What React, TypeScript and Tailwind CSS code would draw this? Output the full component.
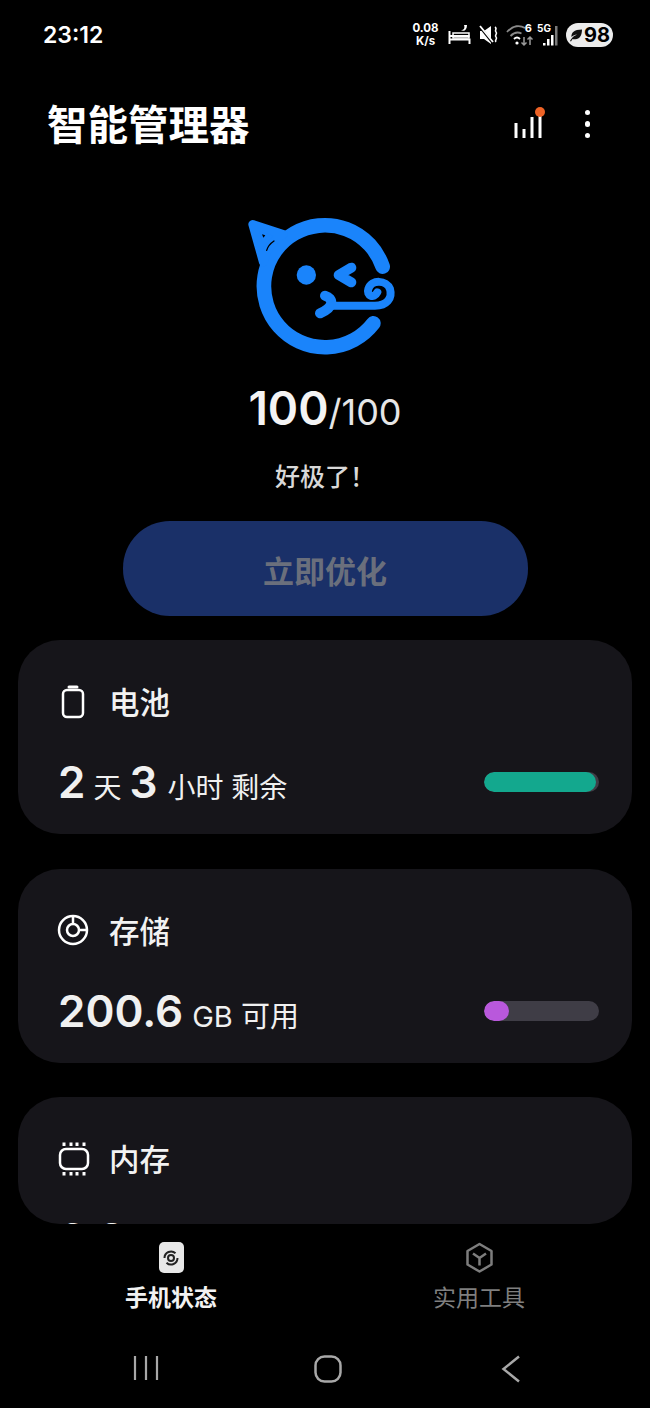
import React from "react";

const fontStack = { fontFamily: 'Inter, "Noto Sans CJK SC", sans-serif' };

const StatusIcons = () => (
  <div className="flex items-center text-white">
    <div className="w-[27px] text-center text-[11.5px] leading-[13px] font-bold">
      <p>0.08</p>
      <p>K/s</p>
    </div>
    {/* bed */}
    <svg width="24" height="22" viewBox="0 0 24 22" className="ml-[9px]" fill="none" stroke="white">
      <path d="M1.5 7v13M1.5 15.5h20v4.5M1.5 12h20" strokeWidth="2" />
      <path d="M16 1c1 3 0 5-3 5 3 2 6 0 6-5z" fill="white" stroke="none" />
      <rect x="5" y="9" width="16" height="5" fill="none" strokeWidth="1.5" />
    </svg>
    {/* mute */}
    <svg width="20" height="22" viewBox="0 0 20 22" className="ml-[7px]" fill="white" stroke="white">
      <path d="M1 7h4l7-5v18l-7-5H1z" stroke="none" />
      <path d="M1 3l12 15" stroke="black" strokeWidth="2.5" />
      <path d="M1 2l13 16" strokeWidth="1.8" />
      <path d="M16 3c3 2-1 3 1 5s-2 3 0 5 -2 3 0 5" fill="none" strokeWidth="1.6" />
    </svg>
    {/* wifi */}
    <div className="relative ml-[7px] h-[24px] w-[28px]">
      <svg width="28" height="24" viewBox="0 0 28 24" fill="none">
        <path d="M1 9c6-7 13-7 18-4" stroke="#8a8a8a" strokeWidth="1.8" />
        <path d="M4.5 13c4-4 8-4 11-2.500" stroke="#8a8a8a" strokeWidth="1.8" />
        <path d="M8 16c2-2 4-2 6 0" stroke="white" strokeWidth="1.8" />
        <circle cx="11" cy="20" r="1.600" fill="white" />
        <path d="M18 14v8M15.500 19.500l2.500 2.500 2.500-2.500" stroke="#9a9a9a" strokeWidth="1.500" />
        <path d="M24 22v-8M21.500 16.500l2.500-2.500 2.500 2.500" stroke="#9a9a9a" strokeWidth="1.500" />
      </svg>
      <span className="absolute right-[2px] top-[-1px] text-[11px] leading-[12px] font-bold">6</span>
    </div>
    {/* 5G signal */}
    <div className="relative ml-[3px] h-[24px] w-[24px]">
      <svg width="24" height="24" viewBox="0 0 24 24">
        <rect x="6" y="20" width="2.500" height="2.500" fill="white" />
        <rect x="10" y="16" width="2.500" height="6.500" fill="white" />
        <rect x="14" y="12" width="2.500" height="10.500" fill="white" />
        <rect x="18" y="3" width="2.500" height="19.500" fill="#7a7a7a" />
      </svg>
      <span className="absolute left-0 top-[-1px] text-[10px] leading-[12px] font-bold">5G</span>
    </div>
    {/* battery pill */}
    <div className="ml-[5px] flex h-[24px] w-[47px] items-center justify-center rounded-full bg-[#ececec] text-black">
      <svg width="14" height="14" viewBox="0 0 14 14" fill="#111">
        <path d="M1 13c1-2 2-3 3-4 1.500-1.500 3-2 4-2.500-2 .3-4 1-5.500 2.500C2 5 5 1.500 13 1.500c0 6-2.500 10-7 9.800-1 0-2 0-2.500-.3L2 13.500z" />
      </svg>
      <span className="ml-[1px] text-[20px] leading-none font-bold">98</span>
    </div>
  </div>
);

const HeroFace = () => (
  <svg width="180" height="160" viewBox="0 0 540 480" fill="none" stroke="#1a84fb" strokeLinecap="round" strokeLinejoin="round">
    {/* head */}
    <path d="M458 185A183 183 0 1 0 430 355" strokeWidth="44" />
    {/* hat */}
    <path d="M68 58L160 88C130 105 110 130 100 172Z" fill="#1a84fb" strokeWidth="26" />
    <path d="M96 88l10 3-6 7z" fill="black" stroke="none" />
    <path d="M110 136c3-10 10-20 22-28" stroke="black" strokeWidth="4" />
    {/* eye */}
    <circle cx="229" cy="210" r="29" fill="#1a84fb" stroke="none" />
    {/* wink */}
    <path d="M364 188L326 210L364 232" strokeWidth="30" />
    {/* mouth */}
    <path d="M285 272C310 280 315 305 270 325" strokeWidth="30" />
    {/* blower */}
    <path d="M310 302H435C470 302 488 280 480 252C470 225 425 222 415 252C408 272 432 282 442 262" strokeWidth="24" />
  </svg>
);

const BatteryIcon = () => (
  <svg width="24" height="34" viewBox="0 0 24 34" fill="none" stroke="white" strokeWidth="2.500" className="mb-[2px] ml-[3px] shrink-0">
    <rect x="2" y="5" width="20" height="27" rx="4" />
    <path d="M8 2h8" strokeWidth="3" strokeLinecap="round" />
  </svg>
);

const StorageIcon = () => (
  <svg width="32" height="32" viewBox="0 0 32 32" fill="none" stroke="white" strokeWidth="2.500" className="mb-[4px] -ml-[1px] shrink-0">
    <circle cx="16" cy="16" r="14" />
    <circle cx="16" cy="16" r="6" />
    <path d="M16 2v8M22 16h8" />
  </svg>
);

const MemoryIcon = () => (
  <svg width="32" height="36" viewBox="0 0 32 36" fill="none" stroke="white" className="mb-[2px] shrink-0">
    <rect x="2" y="8" width="28" height="20" rx="6" strokeWidth="2.500" />
    <path d="M6 1.500v3.500M13 1.500v3.500M19 1.500v3.500M26 1.500v3.500M6 31v3.500M13 31v3.500M19 31v3.500M26 31v3.500" strokeWidth="3" />
  </svg>
);

type CardProps = {
  icon: React.ReactNode;
  title: string;
  children: React.ReactNode;
  barColor?: string;
  barWidth?: number;
};

const StatCard = ({ icon, title, children, barColor, barWidth }: CardProps) => (
  <div className="h-[194px] shrink-0 rounded-[42px] bg-[#16151a] pt-[45px] pl-[40px] pr-[33px]">
    <div className="flex h-[36px] items-center gap-[20px]">
      <div className="flex w-[31px] items-center">{icon}</div>
      <span className="text-[30.5px] leading-[36px] font-medium text-[#f2f2f2]">{title}</span>
    </div>
    <div className="mt-[31px] flex h-[60px] items-center justify-between">
      <div className="flex items-baseline text-[#f0f0f0]">{children}</div>
      {barColor && (
        <div className="h-[20px] w-[115px] overflow-hidden rounded-full bg-[#3f3d46]">
          <div className="h-full rounded-full" style={{ width: barWidth, backgroundColor: barColor }} />
        </div>
      )}
    </div>
  </div>
);

export default function App() {
  return (
    <div style={fontStack} className="flex h-[1408px] w-[650px] flex-col overflow-hidden bg-black text-white">
      {/* Status bar */}
      <div className="flex h-[70px] shrink-0 items-center justify-between pr-[37px] pl-[43px]">
        <span className="text-[23px] font-semibold">23:12</span>
        <StatusIcons />
      </div>

      {/* Header */}
      <div className="flex h-[112px] shrink-0 items-center justify-between pr-[60px] pl-[47px]">
        <h1 className="text-[40.5px] leading-[56px] font-bold">智能管理器</h1>
        <div className="flex items-center gap-[40px]">
          <svg width="34" height="36" viewBox="0 0 34 36" className="mb-[4px]">
            <path d="M5 17v15M13 23v9M21 11v21M29 9v23" stroke="white" strokeWidth="3" />
            <circle cx="29" cy="6" r="5" fill="#ee6326" />
          </svg>
          <div className="mb-[4px] flex flex-col gap-[6px]">
            <div className="size-[5.500px] rounded-full bg-white" />
            <div className="size-[5.500px] rounded-full bg-white" />
            <div className="size-[5.500px] rounded-full bg-white" />
          </div>
        </div>
      </div>

      {/* Score */}
      <div className="flex shrink-0 flex-col items-center">
        <div className="mt-[23px] pr-[10px]">
          <HeroFace />
        </div>
        <div className="mt-[8px] flex h-[70px] items-baseline">
          <span className="text-[46px] leading-[70px] font-semibold text-[#f4f4f4]">100</span>
          <span className="text-[36px] leading-[70px] text-[#e6e6e6]">/100</span>
        </div>
        <p className="mt-[18px] text-[25px] leading-[32px] font-medium text-[#d8d8d8]">好极了！</p>
        <button className="mt-[28px] h-[95px] w-[405px] rounded-[47px] bg-[#1a3068] pt-[8px] text-[31px] font-bold text-[#6a6f7c]">
          立即优化
        </button>
      </div>

      {/* Cards */}
      <div className="mt-[24px] mx-[18px] flex h-[584px] shrink-0 flex-col gap-[34.500px] overflow-hidden rounded-b-[42px]">
        <StatCard icon={<BatteryIcon />} title="电池" barColor="#13a88e" barWidth={112}>
          <span className="text-[44px] font-semibold">2</span>
          <span className="ml-[8px] text-[28px]">天</span>
          <span className="ml-[8px] text-[44px] font-semibold">3</span>
          <span className="ml-[10px] text-[28px]">小时 剩余</span>
        </StatCard>
        <StatCard icon={<StorageIcon />} title="存储" barColor="#b958dc" barWidth={25}>
          <span className="text-[44px] font-semibold">200.6</span>
          <span className="ml-[9px] text-[29px]">GB 可用</span>
        </StatCard>
        <StatCard icon={<MemoryIcon />} title="内存">
          <span className="text-[44px] font-semibold">6.8</span>
          <span className="ml-[9px] text-[29px]">GB 可用</span>
        </StatCard>
      </div>

      {/* Bottom tabs */}
      <div className="flex h-[122px] shrink-0 justify-between pr-[125px] pl-[125px] pt-[18px]">
        <div className="flex flex-col items-center">
          <div className="flex h-[31px] w-[25px] items-center justify-center rounded-[5px] bg-[#e8e8e8]">
            <svg width="16" height="16" viewBox="0 0 16 16" fill="none" stroke="#222" strokeWidth="2">
              <circle cx="8" cy="8" r="3" />
              <path d="M1.500 8a6.500 6.500 0 0 1 11-4.700M14.500 8a6.500 6.500 0 0 1-11 4.700" />
            </svg>
          </div>
          <span className="mt-[10px] text-[23px] leading-[30px] font-bold text-[#f2f2f2]">手机状态</span>
        </div>
        <div className="flex flex-col items-center">
          <svg width="31" height="31" viewBox="0 0 31 31" fill="none" stroke="#7d7d7d" strokeWidth="2.500" strokeLinejoin="round">
            <path d="M15.500 2L27.500 9v13.500L15.500 29.500 3.500 22.500V9z" />
            <path d="M9 11.500l6.500 4.500 6.500-4.500M15.500 16v7.500" />
          </svg>
          <span className="mt-[10px] text-[23px] leading-[30px] text-[#7f7f7f]">实用工具</span>
        </div>
      </div>

      {/* Android nav */}
      <div className="flex h-[70px] shrink-0 items-start justify-between pr-[129px] pl-[133px] pt-[9px]">
        <svg width="26" height="26" viewBox="0 0 26 26" stroke="#a8a8a8" strokeWidth="2.200">
          <path d="M2 1v24M13 1v24M24 1v24" />
        </svg>
        <svg width="28" height="28" viewBox="0 0 28 28" fill="none" stroke="#a8a8a8" strokeWidth="2.500" className="mr-[4px]">
          <rect x="1.500" y="1.500" width="25" height="25" rx="9" />
        </svg>
        <svg width="20" height="28" viewBox="0 0 20 28" fill="none" stroke="#a8a8a8" strokeWidth="2.500">
          <path d="M18 1.500L2.500 14 18 26.500" />
        </svg>
      </div>
    </div>
  );
}
